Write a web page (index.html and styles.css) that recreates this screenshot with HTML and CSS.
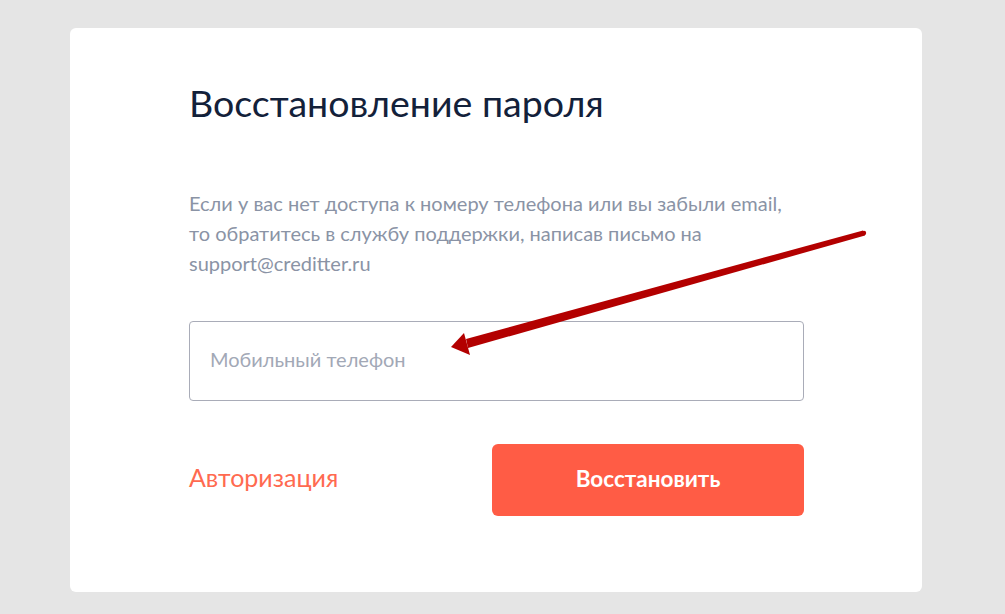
FILE: index.html
```html
<!DOCTYPE html>
<html lang="ru">
<head>
    <meta charset="UTF-8">
    <meta name="viewport" content="width=device-width, initial-scale=1.0">
    <title>Восстановление пароля</title>
    <link rel="stylesheet" href="styles.css">
</head>
<body>
    <div class="card">
        <h1 class="title">Восстановление пароля</h1>
        <p class="hint">Если у вас нет доступа к номеру телефона или вы забыли email,<br>то обратитесь в службу поддержки, написав письмо на<br>support@creditter.ru</p>
        <input class="field" type="text" placeholder="Мобильный телефон">
        <div class="actions">
            <a class="link" href="#">Авторизация</a>
            <button class="submit">Восстановить</button>
        </div>
        <!-- стрелка-пометка поверх формы -->
        <svg class="arrow" width="1005" height="614" viewBox="0 0 1005 614">
            <polygon points="863,230.5 865,235.5 468,348 466,339" fill="#b30000"/>
            <circle cx="864" cy="233" r="2.2" fill="#b30000"/>
            <polygon points="451,347 464,333 470,355" fill="#b30000"/>
        </svg>
    </div>
</body>
</html>
```

FILE: styles.css
```css
body {
    margin: 0;
    background-color: #e5e5e5;
    font-family: 'Lato', 'Noto Sans', sans-serif;
}
.card {
    width: 852px;
    height: 564px;
    box-sizing: border-box;
    margin: 28px 0 0 70px;
    padding: 57px 118px 0 119px;
    background-color: #ffffff;
    border-radius: 6px;
}
.title {
    margin: 0;
    font-size: 37.5px;
    font-weight: 400;
    line-height: 36px;
    color: #13213a;
}
.hint {
    margin: 67px 0 0;
    font-size: 20px;
    line-height: 30px;
    color: #8a93a5;
}
.field {
    display: block;
    width: 615px;
    height: 80px;
    box-sizing: border-box;
    margin-top: 43px;
    padding: 0 20px 4px;
    border: 1px solid #a9acb8;
    border-radius: 4px;
    font-family: inherit;
    font-size: 20px;
    color: #13213a;
    outline: none;
}
.field::placeholder {
    color: #a2a8b6;
}
.actions {
    display: flex;
    align-items: center;
    justify-content: space-between;
    width: 615px;
    margin-top: 43px;
}
.link {
    margin-bottom: 6px;
    font-size: 25px;
    color: #ff6a50;
    text-decoration: none;
}
.submit {
    width: 312px;
    height: 72px;
    padding-bottom: 4px;
    border: none;
    border-radius: 6px;
    background-color: #ff5c45;
    color: #ffffff;
    font-family: inherit;
    font-size: 22.5px;
    font-weight: 700;
    cursor: pointer;
}
.arrow {
    position: absolute;
    left: 0;
    top: 0;
    pointer-events: none;
}
```
